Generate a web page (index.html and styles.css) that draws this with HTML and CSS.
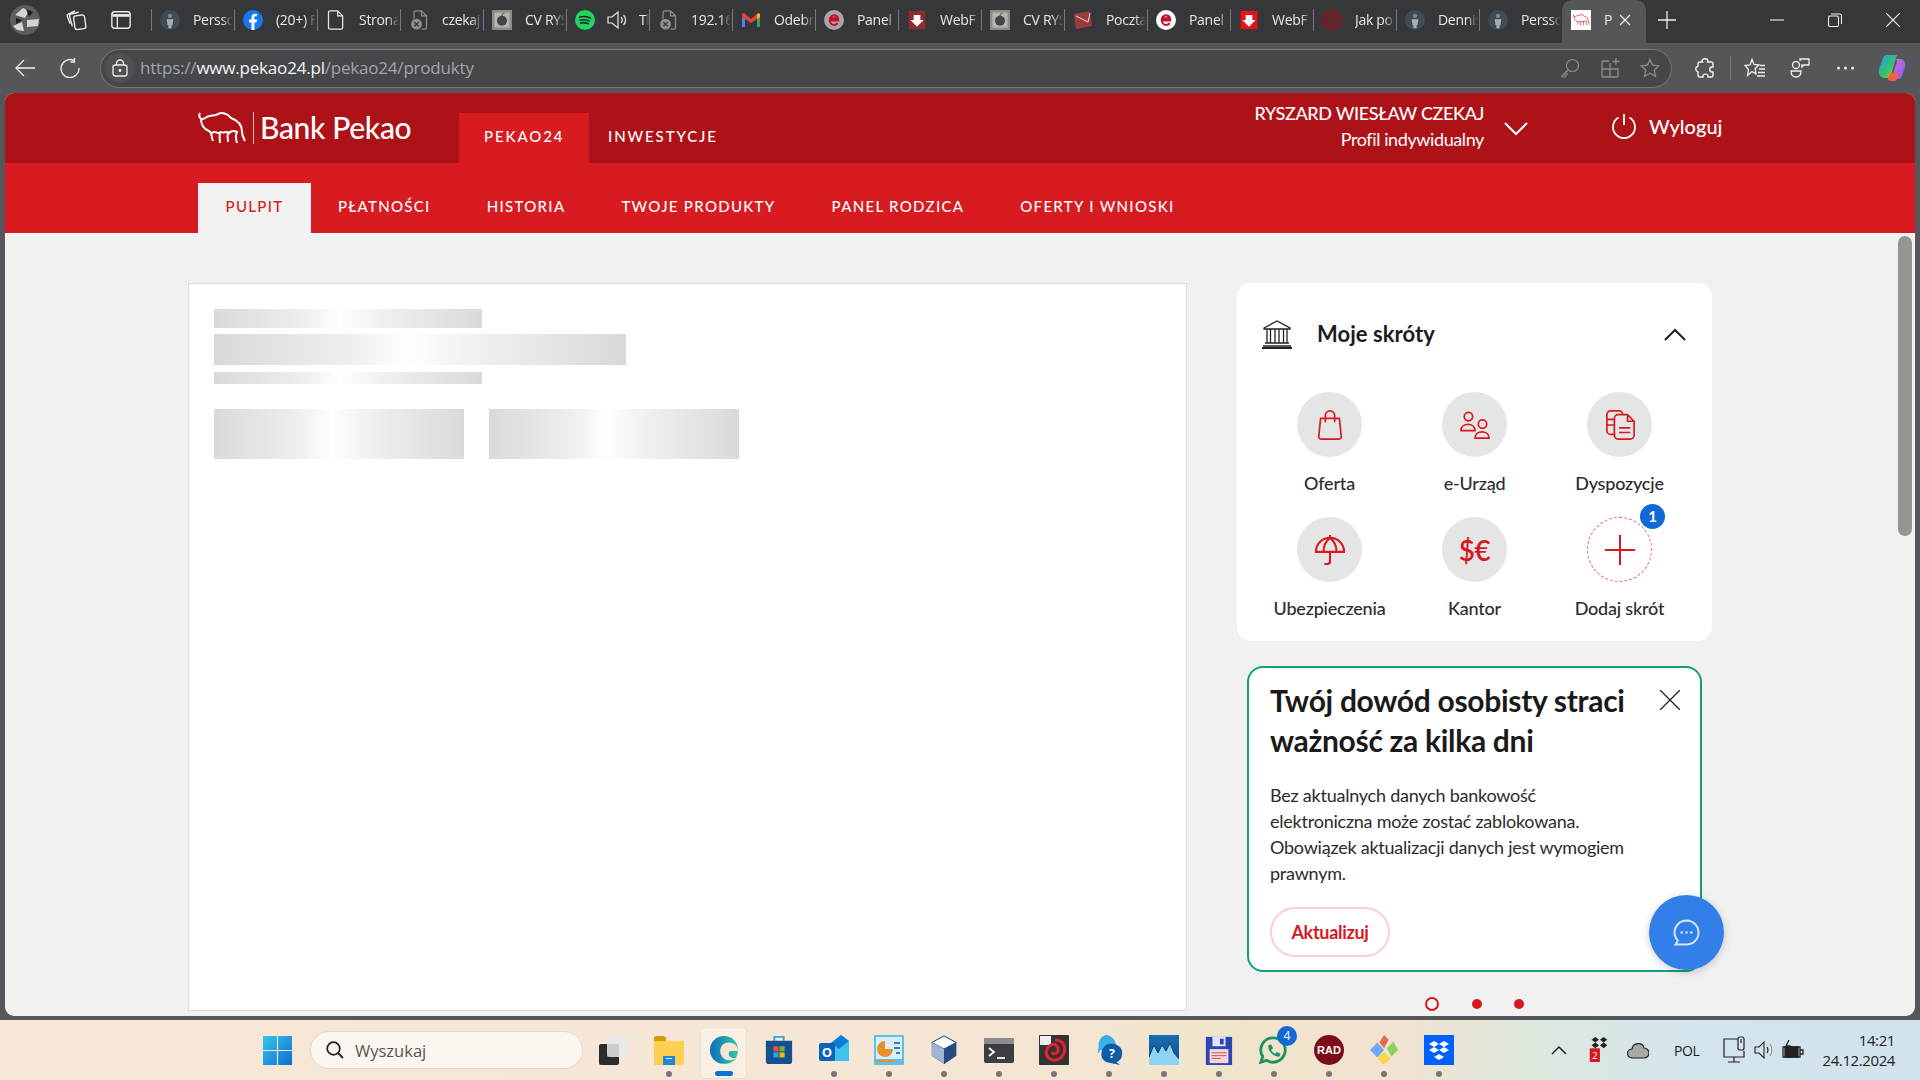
FILE: index.html
```html
<!DOCTYPE html>
<html lang="pl">
<head>
  <meta charset="UTF-8" />
  <title>Bank Pekao</title>
  <link rel="stylesheet" href="styles.css">
</head>
<body>
  <svg class="sprite" width="0" height="0">
    <defs>
      <symbol id="bison" viewBox="0 0 48 32">
        <path d="M2 1C0 5 3 9 7 6 11 3 14 4 18 3 24-1 30 2 33 6 39 8 44 12 44 20 44 24 46 27 47 29M3 7C3 13 6 17 11 19 14 20 13 24 15 29M14 21C17 18 20 23 23 20 26 22 28 18 31 21 34 18 37 19 39 20 37 24 38 28 39 31M22 21C21 24 22 27 22 31M30 21C29 24 30 27 30 30" fill="none" stroke="currentColor" stroke-width="2"/>
      </symbol>
      <symbol id="doc" viewBox="0 0 20 24">
        <path d="M3 1h9l6 6v14a2 2 0 0 1-2 2H3a2 2 0 0 1-2-2V3a2 2 0 0 1 2-2zM12 1v6h6" fill="none" stroke="#e8e8e8" stroke-width="1.5"/>
      </symbol>
      <symbol id="docx" viewBox="0 0 20 24">
        <path d="M6 1h7l6 6v14a2 2 0 0 1-2 2h-4M6 1a2 2 0 0 0-2 2v8M13 1v6h6" fill="none" stroke="#8d8e91" stroke-width="1.5"/>
        <circle cx="7" cy="17" r="6.5" fill="#8d8e91"/>
        <path d="M4.5 14.5l5 5M9.5 14.5l-5 5" stroke="#333" stroke-width="1.5"/>
      </symbol>
      <symbol id="person" viewBox="0 0 24 24">
        <circle cx="12" cy="12" r="12" fill="#3d4c57"/>
        <circle cx="12" cy="7" r="2.6" fill="#8f8276"/>
        <path d="M8 11h8l-1 7h-1v4h-4v-4H9z" fill="#a9aeb3"/>
      </symbol>
      <symbol id="apple" viewBox="0 0 24 24">
        <rect width="24" height="24" fill="#8c8c88"/>
        <rect x="3" y="3" width="18" height="18" fill="#b5b5af"/>
        <circle cx="12" cy="13" r="6" fill="#444"/>
        <path d="M12 7c0-2 1-3 3-3" stroke="#333" fill="none"/>
      </symbol>
      <symbol id="letter-e" viewBox="0 0 24 24">
        <circle cx="12" cy="12" r="12" fill="currentColor"/>
        <path d="M7 12.5h10c0-4-2-6-5-6s-5 2.500-5 5.500 2 6 5 6c2 0 3.500-.8 4.500-2.300M8 10h8" fill="none" stroke="#c8102e" stroke-width="2.600"/>
      </symbol>
      <symbol id="webftp" viewBox="0 0 24 24">
        <path d="M2 1h20v22H2z" fill="currentColor"/>
        <path d="M8 6h8v6h4l-8 8-8-8h4z" fill="#fff"/>
      </symbol>
    </defs>
  </svg>

  <div class="tabstrip">
    <svg class="profile" viewBox="0 0 30 30">
      <circle cx="15" cy="15" r="15" fill="#5d5d5d"/>
      <path d="M5 10l8-7 6 3-4 7zM17 15l12-1-1 7-11 1zM3 21l9-4 2 9-7-1z" fill="#d4d4d4"/>
      <path d="M16 4l7 3-4 5zM6 13l6 2-6 4z" fill="#1f1f1f"/>
    </svg>
    <svg class="strip-icon" viewBox="0 0 24 24" fill="none" stroke="#e8e8e8" stroke-width="1.500">
      <rect x="10" y="7" width="12" height="15" rx="2.500" transform="rotate(-8 16 14)"/>
      <path d="M8 19L5 8a2 2 0 0 1 1.500-2.500L15 3.500M5.500 16L2.500 8a2 2 0 0 1 1-2.500L11 2"/>
    </svg>
    <svg class="strip-icon strip-icon-last" viewBox="0 0 24 24" fill="none" stroke="#e8e8e8" stroke-width="1.500">
      <rect x="2" y="3" width="20" height="18" rx="3"/>
      <path d="M8 7v14"/>
      <path d="M2.500 7h19" stroke-width="3"/>
    </svg>
    <div class="tabs">
      <div class="tab"><svg class="fav"><use href="#person"/></svg><span class="tab-title">Persso</span></div>
      <div class="tab">
        <svg class="fav" viewBox="0 0 20 20"><circle cx="10" cy="10" r="10" fill="#1877f2"/><path d="M8.500 20v-7.500H6V9.500h2.500V7.300C8.500 5 9.900 3.700 12 3.700l2 .2v2.400h-1.200c-1.100 0-1.400.7-1.400 1.400v1.800h2.600l-.4 3h-2.200V20z" fill="#fff"/></svg>
        <span class="tab-title">(20+) F</span>
      </div>
      <div class="tab"><svg class="fav"><use href="#doc"/></svg><span class="tab-title">Strona</span></div>
      <div class="tab"><svg class="fav"><use href="#docx"/></svg><span class="tab-title">czekaj.</span></div>
      <div class="tab"><svg class="fav"><use href="#apple"/></svg><span class="tab-title">CV RYS</span></div>
      <div class="tab">
        <svg class="fav" viewBox="0 0 20 20"><circle cx="10" cy="10" r="10" fill="#1ed760"/><path d="M4.500 7.200c4-1.100 8-.8 11 1M5 10.200c3.300-.9 6.500-.6 9.300.9M5.500 13c2.800-.7 5.400-.5 7.700.8" fill="none" stroke="#222" stroke-width="1.600" stroke-linecap="round"/></svg>
        <svg class="fav fav-sound" viewBox="0 0 20 20" fill="none" stroke="#e8e8e8" stroke-width="1.200"><path d="M1 7h4l6-5v16l-6-5H1zM14 7c1.500 1.800 1.500 4.200 0 6M16.500 5c2.500 3 2.500 7 0 10"/></svg>
        <span class="tab-title tab-title-short">Tl</span>
      </div>
      <div class="tab"><svg class="fav"><use href="#docx"/></svg><span class="tab-title">192.168</span></div>
      <div class="tab">
        <svg class="fav" viewBox="0 0 20 20"><path d="M1 17V4l3 1v12z" fill="#4285f4"/><path d="M16 17V5l3-1v13z" fill="#34a853"/><path d="M1 4l2-1 7 6 7-6 2 1v3l-9 6-9-6z" fill="#ea4335"/><path d="M16 5l1-2 2 1v3l-3 2z" fill="#fbbc04"/></svg>
        <span class="tab-title">Odebr</span>
      </div>
      <div class="tab"><svg class="fav fav-grey"><use href="#letter-e"/></svg><span class="tab-title">Panel</span></div>
      <div class="tab"><svg class="fav fav-dim"><use href="#webftp"/></svg><span class="tab-title">WebF</span></div>
      <div class="tab"><svg class="fav"><use href="#apple"/></svg><span class="tab-title">CV RYS</span></div>
      <div class="tab">
        <svg class="fav" viewBox="0 0 20 20"><path d="M1 4l16-3 2 15-16 3z" fill="#9c3a3e"/><path d="M3 6l12 6 2-9" fill="none" stroke="#ddd" stroke-width="1"/></svg>
        <span class="tab-title">Poczta</span>
      </div>
      <div class="tab"><svg class="fav fav-white"><use href="#letter-e"/></svg><span class="tab-title">Panel</span></div>
      <div class="tab"><svg class="fav fav-red"><use href="#webftp"/></svg><span class="tab-title">WebF</span></div>
      <div class="tab">
        <svg class="fav" viewBox="0 0 20 20"><circle cx="10" cy="10" r="10" fill="#7d1a1f"/><path d="M5 10.500h10c0-4-2-5.500-5-5.500s-5 2.500-5 5 2 5 5 5c2 0 3.500-.8 4-2" fill="none" stroke="#36373b" stroke-width="2.200"/></svg>
        <span class="tab-title">Jak po</span>
      </div>
      <div class="tab"><svg class="fav"><use href="#person"/></svg><span class="tab-title">Dennis</span></div>
      <div class="tab"><svg class="fav"><use href="#person"/></svg><span class="tab-title">Persso</span></div>
      <div class="tab tab-active">
        <svg class="fav" viewBox="0 0 20 20"><rect width="20" height="20" fill="#fff"/><use href="#bison" x="2" y="4" width="17" height="12" color="#d7191f"/></svg>
        <span class="tab-title tab-title-active">P</span>
        <svg class="tab-close" viewBox="0 0 12 12" stroke="#f0f0f0" stroke-width="1.300"><path d="M1 1l10 10M11 1L1 11"/></svg>
      </div>
    </div>
    <svg class="new-tab" viewBox="0 0 18 18" stroke="#f0f0f0" stroke-width="1.300"><path d="M9 0v18M0 9h18"/></svg>
    <div class="win-controls">
      <svg viewBox="0 0 14 14" stroke="#f0f0f0" stroke-width="1.100"><path d="M0 7h14"/></svg>
      <svg viewBox="0 0 14 14" fill="none" stroke="#f0f0f0" stroke-width="1.100"><rect x=".5" y="3" width="10" height="10.500" rx="1.500"/><path d="M3 1h8.500a2 2 0 0 1 2 2v8"/></svg>
      <svg viewBox="0 0 14 14" stroke="#f0f0f0" stroke-width="1.100"><path d="M0 0l14 14M14 0L0 14"/></svg>
    </div>
  </div>

  <div class="toolbar">
    <svg class="tool" viewBox="0 0 20 20" fill="none" stroke="#f0f0f0" stroke-width="1.300"><path d="M20 10H1M9 2l-8 8 8 8"/></svg>
    <svg class="tool" viewBox="0 0 20 20" fill="none" stroke="#f0f0f0" stroke-width="1.300"><path d="M14 2.500A9 9 0 1 0 19 10M14.500 0v4h-4"/></svg>
    <div class="address">
      <span class="lock">
        <svg viewBox="0 0 16 18" fill="none" stroke="#f0f0f0" stroke-width="1.300"><rect x="1" y="6" width="14" height="11" rx="2.500"/><path d="M4.500 6V4.500a3.500 3.500 0 0 1 7 0V6"/><circle cx="8" cy="11.500" r=".8" fill="#f0f0f0"/></svg>
      </span>
      <span class="url">https://<b>www.pekao24.pl</b>/pekao24/produkty</span>
      <svg class="addr-icon addr-key" viewBox="0 0 20 20" fill="none" stroke="#8b8c8f" stroke-width="1.200"><circle cx="12.500" cy="7.500" r="6"/><path d="M8 12l-6 6v1h3v-2h2v-2"/></svg>
      <svg class="addr-icon" viewBox="0 0 20 20" fill="none" stroke="#8b8c8f" stroke-width="1.300"><path d="M9 3H3a1 1 0 0 0-1 1v14a1 1 0 0 0 1 1h14a1 1 0 0 0 1-1v-7H2M10 5v14M16 0v7M12.500 3.500h7"/></svg>
      <svg class="addr-icon" viewBox="0 0 20 20" fill="none" stroke="#8b8c8f" stroke-width="1.300"><path d="M10 1.500l2.600 5.700 6.200.7-4.600 4.200 1.300 6.100L10 15.200l-5.500 3 1.300-6.100L1.200 7.900l6.200-.7z"/></svg>
    </div>
    <svg class="tool tool-ext" viewBox="0 0 20 20" fill="none" stroke="#f0f0f0" stroke-width="1.400"><path d="M7 3c0-3 6-3 6 0l-.5 1H16c1 0 2 1 2 2v3h-1c-3 0-3 5 0 5h1v3c0 1-1 2-2 2h-3v-1c0-2.500-5-2.500-5 0v1H5c-1 0-2-1-2-2v-3c-3-1-3-5 0-6V6c0-1 1-2 2-2h2.500z"/></svg>
    <span class="tool-sep"></span>
    <svg class="tool tool-fav" viewBox="0 0 22 20" fill="none" stroke="#f0f0f0" stroke-width="1.300"><path d="M8 1.500l2 5 5 .5-3.800 3.500L12 16l-4-2.500-4.500 4 1-6L1 7.500l5-.7zM15 11h6M14 14.500h7M13 18h8M16 7.500h5"/></svg>
    <svg class="tool tool-share" viewBox="0 0 20 20" fill="none" stroke="#f0f0f0" stroke-width="1.300"><circle cx="6" cy="7" r="3.500"/><path d="M10 3V1h9v6h-5l-2 2V6M1 13h10c0 4-2 6-5 6s-5-2-5-6z"/></svg>
    <svg class="tool tool-more" viewBox="0 0 20 4" fill="#f0f0f0"><circle cx="3" cy="2" r="1.500"/><circle cx="10" cy="2" r="1.500"/><circle cx="17" cy="2" r="1.500"/></svg>
    <svg class="tool-copilot" viewBox="0 0 28 28">
      <defs>
        <linearGradient id="cp1" x1="0" y1="0" x2="1" y2="1"><stop offset="0" stop-color="#1aa2f5"/><stop offset=".6" stop-color="#37c26a"/><stop offset="1" stop-color="#f5cb2f"/></linearGradient>
        <linearGradient id="cp2" x1="0" y1="0" x2="1" y2="1"><stop offset="0" stop-color="#e36bd8"/><stop offset="1" stop-color="#7a5cf0"/></linearGradient>
      </defs>
      <path d="M9 1h10l-6 20c-.5 2-2 3-4 3H7C2 24 0 20 1 15L5 4c.5-2 2-3 4-3z" fill="url(#cp1)"/>
      <path d="M18 5h4c4 0 6 4 5 8l-3 9c-.5 2-2 3-4 3h-7l6-17c.5-1.500-1-3-1-3z" fill="url(#cp2)"/>
      <path d="M12 19h9l-2 6c-.5 1.500-1.500 2-3 2h-3c-2 0-3-1-3-2z" fill="#f0603a"/>
    </svg>
  </div>

  <div class="page">
    <header class="top-bar">
      <div class="logo">
        <svg class="logo-bison"><use href="#bison"/></svg>
        <span class="logo-line"></span>
        <span class="logo-text">Bank Pekao</span>
      </div>
      <nav class="top-nav">
        <a class="top-link top-link-active">PEKAO24</a>
        <a class="top-link">INWESTYCJE</a>
      </nav>
      <div class="user">
        <span class="user-name">RYSZARD WIESŁAW CZEKAJ</span>
        <span class="user-type">Profil indywidualny</span>
      </div>
      <svg class="user-chevron" viewBox="0 0 24 14" fill="none" stroke="#fff" stroke-width="2"><path d="M1 1l11 11L23 1"/></svg>
      <div class="logout">
        <svg viewBox="0 0 26 26" fill="none" stroke="#fff" stroke-width="1.800"><path d="M13 1v11M7.500 4.500a11 11 0 1 0 11 0"/></svg>
        <span>Wyloguj</span>
      </div>
    </header>
    <nav class="sub-nav">
      <a class="sub-link sub-link-active">PULPIT</a>
      <a class="sub-link">PŁATNOŚCI</a>
      <a class="sub-link">HISTORIA</a>
      <a class="sub-link">TWOJE PRODUKTY</a>
      <a class="sub-link">PANEL RODZICA</a>
      <a class="sub-link">OFERTY I WNIOSKI</a>
    </nav>

    <main class="content">
      <section class="panel">
        <div class="skel skel-a"></div>
        <div class="skel skel-b"></div>
        <div class="skel skel-c"></div>
        <div class="skel-row">
          <div class="skel skel-d"></div>
          <div class="skel skel-d"></div>
        </div>
      </section>

      <aside class="side">
        <section class="shortcuts">
          <div class="shortcuts-head">
            <svg class="bank-icon" viewBox="0 0 30 30" fill="none" stroke="#222" stroke-width="1.300"><path d="M2 9L15 2l13 7v1H2zM5 10.500v13M8.500 10.500v13M13 10.500v13M17 10.500v13M21.500 10.500v13M25 10.500v13M3 24h24M1 27h28" /><path d="M0 29h30" stroke-width="2"/></svg>
            <h2>Moje skróty</h2>
            <svg class="head-chevron" viewBox="0 0 24 14" fill="none" stroke="#222" stroke-width="2.200"><path d="M1 13L12 2l11 11"/></svg>
          </div>
          <div class="shortcut-grid">
            <div class="shortcut">
              <span class="round">
                <svg viewBox="0 0 30 32" fill="none" stroke="#d7191f" stroke-width="1.800"><path d="M5 9h20l2 19a2.500 2.500 0 0 1-2.500 3h-19A2.500 2.500 0 0 1 3 28zM10 13V6a5 5 0 0 1 10 0v7"/></svg>
              </span>
              <span class="shortcut-label">Oferta</span>
            </div>
            <div class="shortcut">
              <span class="round">
                <svg viewBox="0 0 32 30" fill="none" stroke="#d7191f" stroke-width="1.800"><circle cx="9" cy="6" r="4.500"/><path d="M1 21c0-9 15-9 15 0z"/><circle cx="24" cy="14" r="4.500"/><path d="M16 29c0-9 15-9 15 0z"/></svg>
              </span>
              <span class="shortcut-label">e-Urząd</span>
            </div>
            <div class="shortcut">
              <span class="round">
                <svg viewBox="0 0 32 32" fill="none" stroke="#d7191f" stroke-width="1.800"><path d="M11 26H6a4 4 0 0 1-4-4V5a4 4 0 0 1 4-4h9a4 4 0 0 1 4 4"/><path d="M2 10h8M2 16h8"/><path d="M14 5h10l7 7v15a4 4 0 0 1-4 4H14a4 4 0 0 1-4-4V9a4 4 0 0 1 4-4zM24 5v7h7M15 19h12M15 24h12"/></svg>
              </span>
              <span class="shortcut-label">Dyspozycje</span>
            </div>
            <div class="shortcut">
              <span class="round">
                <svg viewBox="0 0 32 32" fill="none" stroke="#d7191f" stroke-width="2.200"><path d="M1 18C1 9 8 3 16 3s15 6 15 15zM16 0v3M9 18c0-7 3-12 7-15 4 3 7 8 7 15M16 18v10a3 3 0 0 1-3 3h-3"/></svg>
              </span>
              <span class="shortcut-label">Ubezpieczenia</span>
            </div>
            <div class="shortcut">
              <span class="round round-text">$€</span>
              <span class="shortcut-label">Kantor</span>
            </div>
            <div class="shortcut">
              <span class="round round-add">
                <svg viewBox="0 0 30 30" stroke="#d7191f" stroke-width="2"><path d="M15 0v30M0 15h30"/></svg>
                <span class="badge">1</span>
              </span>
              <span class="shortcut-label">Dodaj skrót</span>
            </div>
          </div>
        </section>

        <section class="promo">
          <svg class="promo-close" viewBox="0 0 20 20" stroke="#222" stroke-width="1.300"><path d="M0 0l20 20M20 0L0 20"/></svg>
          <h3>Twój dowód osobisty straci ważność za kilka dni</h3>
          <p>Bez aktualnych danych bankowość elektroniczna może zostać zablokowana. Obowiązek aktualizacji danych jest wymogiem prawnym.</p>
          <a class="promo-btn">Aktualizuj</a>
        </section>

        <div class="pager">
          <span class="pager-dot pager-dot-on"></span>
          <span class="pager-dot"></span>
          <span class="pager-dot"></span>
        </div>
      </aside>
    </main>

    <button class="chat">
      <svg viewBox="0 0 28 28" fill="none" stroke="#d6e5fa" stroke-width="2"><path d="M14 1.500a12.500 12.500 0 0 1 0 25H2.500l2.500-4A12.500 12.500 0 0 1 14 1.500z"/><g fill="#d6e5fa" stroke="none"><circle cx="9" cy="14" r="1.300"/><circle cx="14" cy="14" r="1.300"/><circle cx="19" cy="14" r="1.300"/></g></svg>
    </button>
    <div class="scroll-thumb"></div>
  </div>

  <footer class="taskbar">
    <svg class="win-logo" viewBox="0 0 30 30">
      <defs><linearGradient id="win" x1="0" y1="0" x2="1" y2="1"><stop offset="0" stop-color="#36c5f0"/><stop offset="1" stop-color="#0a6fd1"/></linearGradient></defs>
      <path d="M0 0h14.400v14.400H0zM15.600 0H30v14.400H15.600zM0 15.600h14.400V30H0zM15.600 15.600H30V30H15.600z" fill="url(#win)"/>
    </svg>
    <div class="search">
      <svg viewBox="0 0 18 18" fill="none" stroke="#222" stroke-width="1.800"><circle cx="7.500" cy="7.500" r="6.300"/><path d="M12 12l5 5"/></svg>
      <span>Wyszukaj</span>
    </div>
    <div class="apps">
      <div class="app">
        <svg viewBox="0 0 30 30"><rect x="0" y="9" width="20" height="21" rx="2" fill="#2b2b2b"/><rect x="8" y="0" width="22" height="22" rx="2" fill="#e9e9e9" opacity=".85"/></svg>
        <i class="app-dot app-dot-none"></i>
      </div>
      <div class="app">
        <svg viewBox="0 0 30 30"><path d="M0 3a2 2 0 0 1 2-2h8l3 3h-1v4H0z" fill="#d99a10"/><path d="M0 6h30v22a2 2 0 0 1-2 2H2a2 2 0 0 1-2-2z" fill="#ffd04f"/><path d="M9 21h12v9H9z" fill="#1f86d8"/><path d="M12 23.500h6" stroke="#fff" stroke-width="1"/></svg>
        <i class="app-dot"></i>
      </div>
      <div class="app app-current">
        <svg viewBox="0 0 30 32">
          <defs><linearGradient id="edge" x1="0" y1="0" x2="1" y2="0"><stop offset="0" stop-color="#0b6fc2"/><stop offset="1" stop-color="#33c6a4"/></linearGradient></defs>
          <circle cx="15" cy="16" r="15" fill="url(#edge)"/>
          <path d="M30 17c0-6-5-9-10-9-6 0-9 4-9 9 0 6 5 10 10 10 3 0 6-1 8-3-4 1.500-9 0-9-4 0-2 1-3 3-3h7z" fill="#f2e5d4"/>
          <path d="M29 23c-2 5-7 8-14 8-2 0-4-.5-5-1 8 1 15-1 19-7z" fill="#4fd8a0"/>
        </svg>
        <i class="app-dot app-dot-current"></i>
      </div>
      <div class="app">
        <svg viewBox="0 0 30 32"><path d="M10 6V2h10v4" fill="none" stroke="#2aa5e8" stroke-width="2"/><path d="M1 6h28v22a3 3 0 0 1-3 3H4a3 3 0 0 1-3-3z" fill="#144f8f"/><path d="M9 12h5.500v5.500H9z" fill="#e8532b"/><path d="M15.500 12H21v5.500h-5.500z" fill="#6fb33a"/><path d="M9 18.500h5.500V24H9z" fill="#2aa5e8"/><path d="M15.500 18.500H21V24h-5.500z" fill="#f4b400"/></svg>
        <i class="app-dot app-dot-none"></i>
      </div>
      <div class="app">
        <svg viewBox="0 0 30 30"><path d="M12 8l10-8 8 6v20H12z" fill="#3cc3ee"/><path d="M12 8l10-8 8 6-10 8z" fill="#0f7ed0"/><rect y="8" width="16" height="18" rx="2" fill="#0a64b8"/><text x="8" y="22" class="app-letter">O</text></svg>
        <i class="app-dot"></i>
      </div>
      <div class="app">
        <svg viewBox="0 0 30 30"><rect width="30" height="30" rx="1" fill="#5cc0ea"/><rect x="2" y="2" width="26" height="22" fill="#d8eef8"/><path d="M11 6v8h8a8 8 0 1 1-8-8z" fill="#e8912c"/><path d="M20 8h6M20 13h6M22 18h4" stroke="#2d7cc2" stroke-width="2"/><path d="M3 26h18" stroke="#e8912c" stroke-width="2"/></svg>
        <i class="app-dot"></i>
      </div>
      <div class="app">
        <svg viewBox="0 0 30 32"><path d="M15 1l13 7v14l-13 9-13-9V8z" fill="#1b3a6b"/><path d="M15 15L2 8l13-7 13 7z" fill="#fff" stroke="#1b3a6b"/><path d="M15 15v16L2 22V8z" fill="#9fb6d2"/><path d="M15 15v16l13-9V8z" fill="#284d85"/></svg>
        <i class="app-dot"></i>
      </div>
      <div class="app">
        <svg viewBox="0 0 30 30"><rect y="3" width="30" height="25" rx="2" fill="#3a3d42"/><path d="M0 5a2 2 0 0 1 2-2h26a2 2 0 0 1 2 2v4H0z" fill="#8b8d90"/><path d="M5 13l5 4-5 4" fill="none" stroke="#fff" stroke-width="1.800"/><path d="M13 23h8" stroke="#fff" stroke-width="1.800"/></svg>
        <i class="app-dot"></i>
      </div>
      <div class="app">
        <svg viewBox="0 0 30 30"><rect width="30" height="30" rx="1" fill="#333"/><rect x="1" y="1" width="11" height="9" fill="#eee"/><path d="M16 5c8 0 11 6 9 13-2 6-9 9-14 6S6 13 12 10c4-2 8 1 7 6-1 3-5 4-6 1" fill="none" stroke="#e0232e" stroke-width="3"/></svg>
        <i class="app-dot"></i>
      </div>
      <div class="app">
        <svg viewBox="0 0 30 32"><path d="M11 0a11 11 0 0 1 10 16H6l-3 4 1-8A11 11 0 0 1 11 0z" fill="#3ab0ea"/><path d="M17 9a12 10 0 0 1 12 11c0 5-3 8-6 9l4 3-9-2C10 30 6 25 7 19 8 13 12 9 17 9z" fill="#0f5ba8"/><text x="18" y="25" class="app-letter">?</text></svg>
        <i class="app-dot"></i>
      </div>
      <div class="app">
        <svg viewBox="0 0 30 30"><defs><linearGradient id="wave" x1="0" y1="0" x2="0" y2="1"><stop offset="0" stop-color="#1a6fb5"/><stop offset="1" stop-color="#0c4b87"/></linearGradient></defs><rect width="30" height="30" fill="url(#wave)"/><path d="M0 22l5-12 4 8 4-8 4 6 4-8 4 10 5 6v12H0z" fill="#8fd3f2"/><path d="M0 22l5-12 4 8 4-8 4 6 4-8 4 10 5 6" fill="none" stroke="#0c3f73" stroke-width="1"/></svg>
        <i class="app-dot"></i>
      </div>
      <div class="app">
        <svg viewBox="0 0 30 32"><path d="M1 2h28v30H1z" fill="#2a46b8"/><path d="M8 2h14v10H8z" fill="#dfe6f7"/><path d="M16 4h4v6h-4z" fill="#2a46b8"/><path d="M5 15h20v15H5z" fill="#f5d6d6"/><path d="M7 19h16M7 22h16M7 25h10" stroke="#c05050"/></svg>
        <i class="app-dot"></i>
      </div>
      <div class="app">
        <svg viewBox="0 0 32 32"><path d="M15 3a13 13 0 1 1-7 24l-6 2 2-6A13 13 0 0 1 15 3z" fill="none" stroke="#1e9160" stroke-width="3"/><path d="M10 11l3-1 2 4-2 2c1 2 2 3 4 4l2-2 4 2-1 3c-6 1-13-6-12-12z" fill="#1e9160"/></svg>
        <i class="app-dot"></i>
        <span class="app-badge">4</span>
      </div>
      <div class="app">
        <svg viewBox="0 0 30 30"><circle cx="15" cy="15" r="15" fill="#7c0d16"/><text x="15" y="19" class="app-rad">RAD</text></svg>
        <i class="app-dot"></i>
      </div>
      <div class="app">
        <svg viewBox="0 0 30 32"><path d="M0 16l8-8 7 8-7 8z" fill="#6fa8f5"/><path d="M18 14l7-7 5 9-7 7z" fill="#8bd45a"/><path d="M8 25l7-7 7 7-7 7z" fill="#f5d949"/><path d="M10 8l5-8 5 5-5 9z" fill="#e8694d"/></svg>
        <i class="app-dot"></i>
      </div>
      <div class="app">
        <svg viewBox="0 0 30 30"><rect width="30" height="30" fill="#0061fe"/><path d="M10 6l5 3-5 3-5-3zM20 6l5 3-5 3-5-3zM10 12l5 3-5 3-5-3zM20 12l5 3-5 3-5-3zM15 19l5 3-5 3-5-3z" fill="#fff"/></svg>
        <i class="app-dot"></i>
      </div>
    </div>
    <div class="tray">
      <svg class="tray-chevron" viewBox="0 0 16 10" fill="none" stroke="#222" stroke-width="1.500"><path d="M1 9l7-7 7 7"/></svg>
      <svg class="tray-dbx" viewBox="0 0 20 28"><path d="M6 0l4 3-4 3-4-3zM15 0l4 3-4 3-4-3zM6 6l4 3-4 3-4-3zM15 6l4 3-4 3-4-3z" fill="#222"/><rect x="0" y="12" width="11" height="15" rx="1" fill="#d7191f"/><text x="5.500" y="24" class="tray-two">2</text></svg>
      <svg class="tray-cloud" viewBox="0 0 22 18"><path d="M5 17a4.500 4.500 0 0 1 0-9c1-7 11-7 12-1a5 5 0 0 1 0 10z" fill="#a9a9a5" stroke="#222" stroke-width="1.200"/></svg>
      <span class="tray-lang">POL</span>
      <svg class="tray-net" viewBox="0 0 24 28" fill="none" stroke="#222" stroke-width="1.200"><path d="M16 3H2v18h20v-6M6 26h12M12 21v5"/><rect x="16" y="1" width="6" height="13" rx="2"/><path d="M19 3v4"/></svg>
      <svg class="tray-sound" viewBox="0 0 20 20" fill="none" stroke="#222" stroke-width="1.100"><path d="M1 7h4l5-5v16l-5-5H1z"/><path d="M13 7c1.200 1.800 1.200 4.200 0 6" /><path d="M16 4c2.500 3.500 2.500 8.500 0 12" stroke="#999"/></svg>
      <svg class="tray-batt" viewBox="0 0 22 20" fill="none" stroke="#222" stroke-width="1.300"><path d="M1 7h17v10H1zM18 10h3v4h-3z"/><path d="M3 7h13v10H3z" fill="#222"/><path d="M7 0L4 6h4l-2 5" stroke="#222"/></svg>
      <div class="clock">
        <span>14:21</span>
        <span>24.12.2024</span>
      </div>
    </div>
  </footer>
</body>
</html>
```

FILE: styles.css
```css
* {
  box-sizing: border-box;
}

html,
body {
  margin: 0;
  height: 1080px;
}

body {
  width: 1920px;
  overflow: hidden;
  background: #55565a;
  font-family: "Lato", sans-serif;
  color: #222;
}

.sprite {
  position: absolute;
}

/* browser: tab strip */
.tabstrip {
  display: flex;
  align-items: center;
  height: 43px;
  background: #36373b;
  color: #e8e8e8;
  font-family: "Open Sans", sans-serif;
  font-size: 14px;
}

.profile {
  width: 30px;
  height: 30px;
  margin: 0 0 3px 10px;
}

.strip-icon {
  width: 22px;
  height: 22px;
  margin: 0 0 3px 25px;
}

.strip-icon-last {
  margin-left: 23px;
  margin-right: 19px;
}

.tabs {
  display: flex;
  height: 43px;
}

.tab {
  display: flex;
  align-items: center;
  width: 83px;
  height: 43px;
  padding: 0 0 3px 9px;
  position: relative;
}

.tab::before {
  content: "";
  position: absolute;
  left: 0;
  top: 9px;
  height: 22px;
  border-left: 1px solid #77787b;
}

.tab-active {
  width: 84px;
  background: #55565a;
  border-radius: 10px 10px 0 0;
}

.tab-active::before {
  display: none;
}

.fav {
  flex: none;
  width: 20px;
  height: 20px;
}

.fav-sound {
  margin-left: 12px;
}

.fav-grey {
  color: #a7a7a7;
}

.fav-white {
  color: #fff;
}

.fav-dim {
  color: #8f2a2e;
}

.fav-red {
  color: #e5141c;
}

.tab-title {
  margin: 0 0 2px 13px;
  flex: 1;
  overflow: hidden;
  white-space: nowrap;
  -webkit-mask-image: linear-gradient(90deg, #000 70%, transparent 98%);
  mask-image: linear-gradient(90deg, #000 70%, transparent 98%);
  letter-spacing: -0.3px;
}

.tab-title-short {
  margin-left: 12px;
}

.tab-title-active {
  flex: none;
  -webkit-mask-image: none;
  mask-image: none;
}

.tab-close {
  width: 12px;
  height: 12px;
  margin-left: 7px;
}

.new-tab {
  width: 18px;
  height: 18px;
  margin: 0 0 3px 12px;
}

.win-controls {
  display: flex;
  gap: 44px;
  margin: 0 0 3px 94px;
}

.win-controls svg {
  width: 14px;
  height: 14px;
}

/* browser: address bar */
.toolbar {
  display: flex;
  align-items: center;
  height: 50px;
  background: #55565a;
  padding-left: 15px;
}

.tool {
  flex: none;
  width: 20px;
  height: 20px;
  margin-right: 25px;
}

.toolbar > .tool:nth-child(2) {
  margin-right: 20px;
}

.address {
  display: flex;
  align-items: center;
  width: 1572px;
  height: 39px;
  background: #46474b;
  border: 1px solid #77787b;
  border-radius: 20px;
  padding-left: 4px;
  margin-right: 23px;
}

.lock {
  display: flex;
  align-items: center;
  justify-content: center;
  width: 30px;
  height: 30px;
  border-radius: 50%;
  background: #505155;
}

.lock svg {
  width: 16px;
  height: 18px;
}

.url {
  margin: 0 auto 2px 5px;
  font-family: "Open Sans", sans-serif;
  font-size: 17px;
  letter-spacing: -0.2px;
  color: #a3a4a7;
}

.url b {
  font-weight: 400;
  color: #f4f4f4;
}

.addr-icon {
  flex: none;
  width: 20px;
  height: 20px;
  margin-right: 20px;
}

.addr-icon:last-child {
  margin-right: 11px;
}

.tool-ext {
  margin-right: 15px;
}

.tool-sep {
  flex: none;
  height: 24px;
  border-left: 1px solid #77787b;
  margin-right: 13px;
}

.tool-fav {
  width: 22px;
  margin-right: 24px;
}

.tool-share {
  margin-right: 24.5px;
}

.tool-more {
  width: 21px;
  height: 4px;
  margin-right: 22px;
}

.tool-copilot {
  flex: none;
  width: 28px;
  height: 28px;
}

/* bank page */
.page {
  position: relative;
  height: 923px;
  margin: 0 5px;
  border-radius: 9px;
  overflow: hidden;
  background: #f1f1f1;
}

.top-bar {
  display: flex;
  height: 70px;
  padding-left: 193px;
  background: #ae1219;
  color: #fff;
}

.logo {
  display: flex;
  align-items: center;
  height: 70px;
  padding-bottom: 1px;
}

.logo-bison {
  width: 48px;
  height: 32px;
}

.logo-line {
  height: 32px;
  margin: 0 6px 0 7px;
  border-left: 1px solid #e9bfc1;
}

.logo-text {
  width: 199px;
  margin-bottom: 2px;
  font-size: 30px;
  font-weight: 500;
  letter-spacing: -0.35px;
}

.top-nav {
  display: flex;
  align-self: flex-end;
  height: 50px;
  width: 747px;
}

.top-link {
  display: flex;
  align-items: center;
  padding: 0 19px 5px;
  font-size: 15px;
  font-weight: 500;
  letter-spacing: 1.9px;
}

.top-link-active {
  width: 130px;
  padding: 0 0 5px 25px;
  background: #d81a21;
}

.user {
  display: flex;
  flex-direction: column;
  align-items: flex-end;
  width: 278px;
  padding-top: 8px;
}

.user-name {
  font-size: 18px;
  font-weight: 500;
  line-height: 24px;
  letter-spacing: -0.35px;
}

.user-type {
  font-size: 18px;
  font-weight: 400;
  line-height: 28px;
  letter-spacing: -0.4px;
}

.user-chevron {
  width: 24px;
  height: 14px;
  margin: 29px 0 0 20px;
}

.logout {
  display: flex;
  align-items: center;
  gap: 12px;
  height: 70px;
  margin-left: 83px;
  padding-bottom: 4px;
  font-size: 20px;
  font-weight: 500;
}

.logout svg {
  width: 26px;
  height: 26px;
}

.sub-nav {
  display: flex;
  align-items: flex-end;
  height: 70px;
  padding-left: 193px;
  background: #d81a21;
}

.sub-link {
  display: flex;
  align-items: center;
  height: 50px;
  margin-right: 56px;
  padding-bottom: 5px;
  color: #fff;
  font-size: 15px;
  font-weight: 500;
  letter-spacing: 1.3px;
}

.sub-link-active {
  justify-content: center;
  width: 113px;
  margin-right: 27px;
  background: #f1f1f1;
  color: #d81a21;
}

.content {
  display: flex;
  padding: 50px 0 0 183px;
  gap: 50px;
}

/* left panel with loading placeholders */
.panel {
  flex: none;
  width: 999px;
  height: 728px;
  padding: 25px;
  background: #fff;
  border: 1px solid #dcdcdc;
}

.skel {
  background: linear-gradient(90deg, #d9d9d9 0%, #efefef 34%, #fff 47%, #f2f2f2 60%, #d9d9d9 100%);
}

.skel-a {
  width: 268px;
  height: 19px;
}

.skel-b {
  width: 412px;
  height: 31px;
  margin-top: 6px;
}

.skel-c {
  width: 268px;
  height: 12px;
  margin-top: 7px;
}

.skel-row {
  display: flex;
  gap: 25px;
  margin-top: 25px;
}

.skel-d {
  width: 250px;
  height: 50px;
}

.side {
  flex: none;
  width: 475px;
}

.shortcuts {
  height: 358px;
  padding: 36px 20px 0;
  background: #fff;
  border-radius: 14px;
}

.shortcuts-head {
  display: flex;
  align-items: center;
  height: 30px;
  padding-left: 5px;
}

.bank-icon {
  width: 30px;
  height: 30px;
}

.shortcuts-head h2 {
  margin: 0 0 2px 25px;
  font-size: 22px;
  font-weight: 700;
  letter-spacing: 0.05px;
  color: #1c1c1c;
}

.head-chevron {
  width: 22px;
  height: 13px;
  margin: 0 6px 0 auto;
}

.shortcut-grid {
  display: grid;
  grid-template-columns: repeat(3, 145px);
  grid-auto-rows: 125px;
  margin-top: 43px;
}

.shortcut {
  display: flex;
  flex-direction: column;
  align-items: center;
}

.round {
  position: relative;
  display: flex;
  align-items: center;
  justify-content: center;
  width: 65px;
  height: 65px;
  border-radius: 50%;
  background: #e5e5e5;
}

.round svg {
  width: 30px;
  height: 30px;
}

.round-text {
  color: #d7191f;
  font-size: 28px;
  font-weight: 600;
  letter-spacing: -0.5px;
}

.round-add {
  background: none;
  border: 1px dashed #e5606a;
}

.badge {
  position: absolute;
  top: -14px;
  right: -14px;
  width: 25px;
  height: 25px;
  border-radius: 50%;
  background: #1268d6;
  color: #fff;
  font-size: 15px;
  font-weight: 700;
  line-height: 25px;
  text-align: center;
}

.shortcut-label {
  margin-top: 14px;
  font-size: 18px;
  font-weight: 500;
  line-height: 24px;
  letter-spacing: -0.2px;
  color: #2b2b2b;
}

.promo {
  position: relative;
  width: 455px;
  height: 306px;
  margin: 25px 0 0 10px;
  padding: 12px 21px 0;
  background: #fff;
  border: 2px solid #11a07a;
  border-radius: 16px;
}

.promo h3 {
  margin: 0;
  width: 370px;
  font-size: 30px;
  font-weight: 700;
  line-height: 40px;
  letter-spacing: -0.3px;
  color: #1a1a1a;
}

.promo p {
  margin: 22px 0 0;
  width: 362px;
  font-size: 18px;
  line-height: 26px;
  letter-spacing: -0.23px;
  color: #2b2b2b;
}

.promo-close {
  position: absolute;
  top: 22px;
  right: 20px;
  width: 20px;
  height: 20px;
}

.promo-btn {
  display: inline-flex;
  align-items: center;
  justify-content: center;
  width: 120px;
  height: 50px;
  margin-top: 21px;
  border: 2px solid #fbcfd1;
  border-radius: 25px;
  color: #d7191f;
  font-size: 18px;
  font-weight: 700;
  letter-spacing: -0.3px;
}

.pager {
  display: flex;
  align-items: center;
  height: 14px;
  margin: 25px 0 0 188px;
}

.pager-dot {
  width: 10px;
  height: 10px;
  margin-left: 32px;
  border-radius: 50%;
  background: #d7191f;
}

.pager-dot:nth-child(2) {
  margin-left: 33px;
}

.pager-dot-on {
  width: 14px;
  height: 14px;
  margin-left: 0;
  background: none;
  border: 2px solid #d7191f;
}

.chat {
  position: absolute;
  left: 1643.5px;
  top: 801.5px;
  display: flex;
  align-items: center;
  justify-content: center;
  width: 75px;
  height: 75px;
  padding: 0;
  border: none;
  border-radius: 50%;
  background: #327fe9;
  box-shadow: 0 2px 8px rgba(0, 0, 0, 0.2);
}

.chat svg {
  width: 27px;
  height: 27px;
}

.scroll-thumb {
  position: absolute;
  top: 143px;
  right: 3px;
  width: 14px;
  height: 300px;
  border-radius: 7px;
  background: #959595;
}

/* windows taskbar */
.taskbar {
  display: flex;
  align-items: center;
  height: 60px;
  margin-top: 4px;
  padding-left: 263px;
  background: linear-gradient(90deg, #f6e7d8 0%, #f5e6d4 55%, #efe5cb 64%, #f3e2d0 72%, #dde8de 80%, #d3e4ec 88%, #d2e3ee 100%);
}

.win-logo {
  flex: none;
  width: 29px;
  height: 29px;
}

.search {
  flex: none;
  display: flex;
  align-items: center;
  gap: 11px;
  width: 273px;
  height: 38px;
  margin: 0 3px 0 18px;
  padding-left: 15px;
  background: #fbf6ef;
  border: 1px solid #e3d8ca;
  border-radius: 19px;
  color: #555;
  font-family: "Open Sans", sans-serif;
  font-size: 16.5px;
}

.search svg {
  width: 18px;
  height: 18px;
}

.apps {
  display: flex;
  height: 60px;
}

.app {
  position: relative;
  display: flex;
  flex-direction: column;
  align-items: center;
  width: 55px;
  padding-top: 15px;
}

.app svg {
  width: 30px;
  height: 30px;
}

.app-current::before {
  content: "";
  position: absolute;
  top: 7px;
  bottom: 1px;
  left: 4px;
  right: 4px;
  background: #f9efe3;
  border: 1px solid #ecdfd0;
  border-radius: 4px;
}

.app-current svg,
.app-current i {
  position: relative;
}

.app-dot {
  width: 6px;
  height: 6px;
  margin-top: 6px;
  border-radius: 50%;
  background: #777;
}

.app-dot-none {
  background: none;
}

.app-dot-current {
  width: 18px;
  height: 5px;
  border-radius: 3px;
  background: #0f73d3;
}

.app-badge {
  position: absolute;
  top: 6px;
  right: 4px;
  width: 20px;
  height: 20px;
  border-radius: 50%;
  background: #1268d6;
  color: #fff;
  font-family: "Open Sans", sans-serif;
  font-size: 12px;
  line-height: 20px;
  text-align: center;
}

.app-letter {
  fill: #fff;
  font-family: "Open Sans", sans-serif;
  font-size: 13px;
  font-weight: 700;
  text-anchor: middle;
}

.app-rad {
  fill: #fff;
  font-family: "Liberation Sans", sans-serif;
  font-size: 11px;
  font-weight: 700;
  text-anchor: middle;
}

.tray {
  display: flex;
  align-items: center;
  margin-left: 85px;
  font-family: "Open Sans", sans-serif;
  font-size: 14px;
  color: #222;
}

.tray-chevron {
  width: 16px;
  height: 10px;
}

.tray-dbx {
  width: 20px;
  height: 26px;
  margin-left: 22px;
}

.tray-two {
  fill: #fff;
  font-size: 10px;
  text-anchor: middle;
}

.tray-cloud {
  width: 22px;
  height: 18px;
  margin-left: 18px;
}

.tray-lang {
  width: 40px;
  margin-left: 25px;
  letter-spacing: -0.4px;
}

.tray-net {
  width: 24px;
  height: 28px;
  margin-left: 8px;
}

.tray-sound {
  width: 20px;
  height: 20px;
  margin-left: 8px;
}

.tray-batt {
  width: 22px;
  height: 20px;
  margin-left: 8px;
}

.clock {
  display: flex;
  flex-direction: column;
  align-items: flex-end;
  gap: 3px;
  width: 91px;
  font-size: 15px;
  line-height: 17px;
  letter-spacing: -0.4px;
}
```
